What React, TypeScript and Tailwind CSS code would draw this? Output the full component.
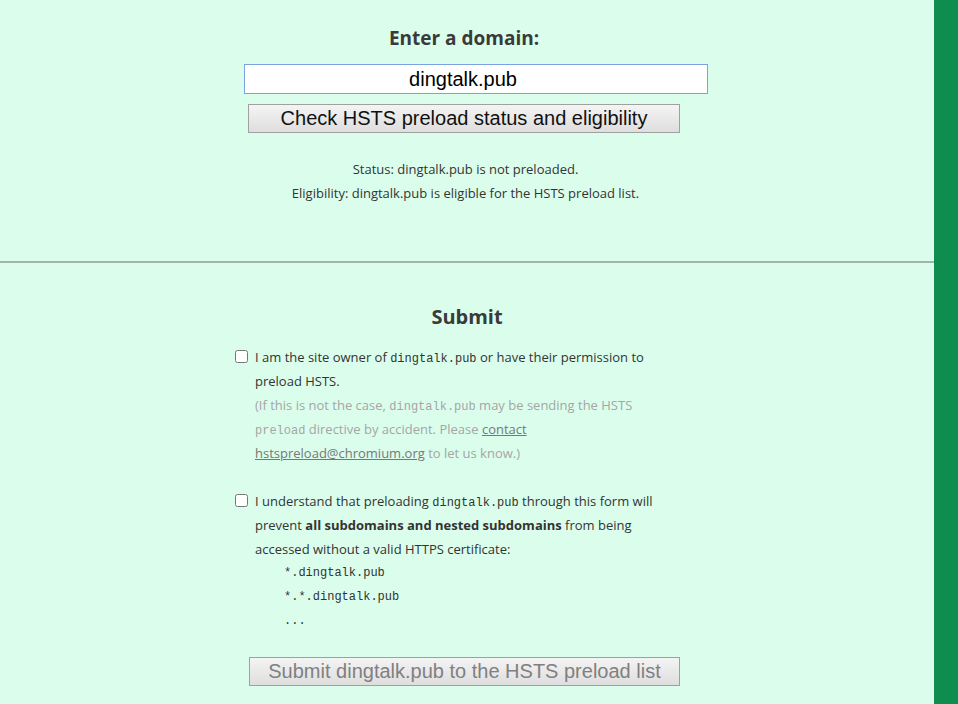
import React from "react";

const monoFont = "font-['Liberation_Mono','DejaVu_Sans_Mono',monospace] text-[12px]";
const mono = `${monoFont} leading-none`;

const Domain = () => <code className={mono}>dingtalk.pub</code>;

const App = () => {
  return (
    <div className="flex min-h-[704px] w-full bg-[#dbfeec] font-['Open_Sans','Noto_Sans',sans-serif] text-[#333]">
      <main className="flex-1">
        {/* check form */}
        <section className="flex flex-col items-center pt-[24px] pb-[56px]">
          <h2 className="text-[19px] font-bold text-[#3a3a3a] leading-[28px] mr-[6px]">Enter a domain:</h2>
          <input
            className="mt-[12px] ml-[18px] w-[464px] h-[30px] pr-[26px] border border-[#7da2e3] bg-white text-center font-['Liberation_Sans',Arial,sans-serif] text-[20px] text-black outline-none"
            defaultValue="dingtalk.pub"
          />
          <button className="mt-[10px] ml-[-6px] w-[432px] h-[29px] border border-[#a0a0a0] bg-gradient-to-b from-[#f4f4f4] to-[#dedede] font-['Liberation_Sans',Arial,sans-serif] text-[20px] leading-[27px] text-[#111]">
            Check HSTS preload status and eligibility
          </button>
          <div className="mt-[24px] text-center text-[13px] leading-[24px] ml-[-3px]">
            <p>Status: dingtalk.pub is not preloaded.</p>
            <p>Eligibility: dingtalk.pub is eligible for the HSTS preload list.</p>
          </div>
        </section>

        <hr className="border-0 h-[2px] bg-[#a3b5ab]" />

        {/* submit form */}
        <section className="flex flex-col items-center pt-[40px]">
          <h2 className="text-[20px] font-bold text-[#3a3a3a] leading-[28px]">Submit</h2>
          <div className="mt-[14px] w-[440px] ml-[-24px] text-[13px] leading-[24px]">
            <label className="flex gap-[7px]">
              <input type="checkbox" className="mt-[5px] h-[13px] w-[13px] shrink-0" />
              <span>
                I am the site owner of <Domain /> or have their permission to preload HSTS.
                <br />
                <span className="text-[#a5a5a5]">
                  (If this is not the case, <Domain /> may be sending the HSTS <code className={mono}>preload</code> directive by
                  accident. Please <a className="text-[#777] underline" href="#">contact hstspreload@chromium.org</a> to let
                  us know.)
                </span>
              </span>
            </label>

            <label className="mt-[24px] flex gap-[7px]">
              <input type="checkbox" className="mt-[5px] h-[13px] w-[13px] shrink-0" />
              <span>
                I understand that preloading <Domain /> through this form will prevent{" "}
                <b>all subdomains and nested subdomains</b> from being accessed without a valid HTTPS certificate:
                <ul className="pl-[29px]">
                  <li className={`${monoFont} leading-[24px]`}>*.dingtalk.pub</li>
                  <li className={`${monoFont} leading-[24px]`}>*.*.dingtalk.pub</li>
                  <li className={`${monoFont} leading-[24px]`}>...</li>
                </ul>
              </span>
            </label>
          </div>
          <button
            disabled
            className="mt-[24px] ml-[-5px] w-[431px] h-[29px] border border-[#a0a0a0] bg-gradient-to-b from-[#f4f4f4] to-[#dedede] font-['Liberation_Sans',Arial,sans-serif] text-[20px] leading-[27px] text-[#808080]"
          >
            Submit dingtalk.pub to the HSTS preload list
          </button>
        </section>
      </main>
      <div className="w-[24px] shrink-0 bg-[#0f8c50]" />
    </div>
  );
};

export default App;
